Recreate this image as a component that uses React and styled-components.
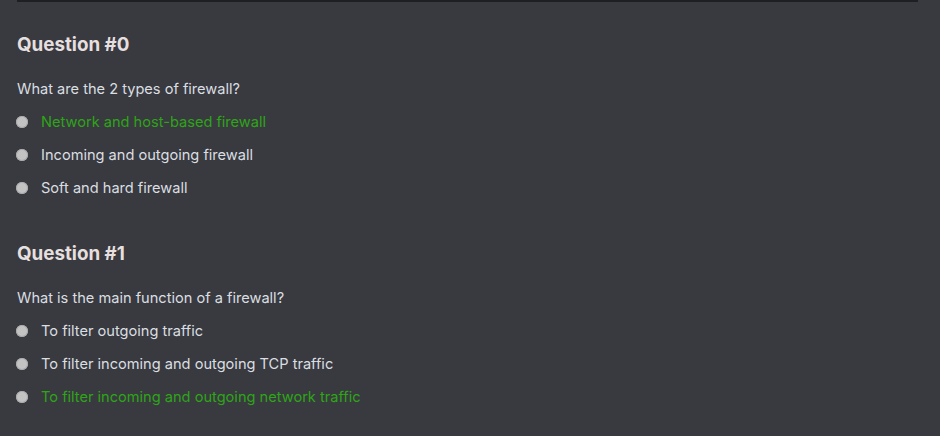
import React from "react";
import styled, { createGlobalStyle } from "styled-components";

const questions = [
	{
		title: "Question #0",
		text: "What are the 2 types of firewall?",
		answers: [
			{ label: "Network and host-based firewall", correct: true },
			{ label: "Incoming and outgoing firewall" },
			{ label: "Soft and hard firewall" },
		],
	},
	{
		title: "Question #1",
		text: "What is the main function of a firewall?",
		answers: [
			{ label: "To filter outgoing traffic" },
			{ label: "To filter incoming and outgoing TCP traffic" },
			{ label: "To filter incoming and outgoing network traffic", correct: true },
		],
	},
];

const App = () => {
	return (
		<StyledPage>
			<GlobalStyle />
			<StyledDivider />
			<StyledList>
				{questions.map((q) => (
					<StyledQuestion key={q.title}>
						<StyledTitle>{q.title}</StyledTitle>
						<StyledText>{q.text}</StyledText>
						<StyledAnswers>
							{q.answers.map((a) => (
								<StyledAnswer key={a.label}>
									<StyledRadio />
									<StyledLabel $correct={a.correct}>{a.label}</StyledLabel>
								</StyledAnswer>
							))}
						</StyledAnswers>
					</StyledQuestion>
				))}
			</StyledList>
		</StyledPage>
	);
};

const GlobalStyle = createGlobalStyle`
	html, body {
		margin: 0;
		background: #383a40;
	}
	body {
		font-family: Inter, "Noto Sans", sans-serif;
	}
`;

const StyledPage = styled.div`
	min-height: 436px;
	padding: 0 22px 0 17px;
	background: #383a40;
	box-sizing: border-box;
`;

const StyledDivider = styled.div`
	height: 2px;
	background: #1e1f22;
`;

const StyledList = styled.div`
	display: flex;
	flex-direction: column;
	gap: 45px;
	padding: 31px 0 0 0;
`;

const StyledQuestion = styled.div`
	display: flex;
	flex-direction: column;
`;

const StyledTitle = styled.h2`
	margin: 0;
	font-size: 18.8px;
	line-height: 24px;
	font-weight: 700;
	color: #e6dfdf;
`;

const StyledText = styled.p`
	margin: 23px 0 0 0;
	font-size: 14.6px;
	line-height: 18px;
	color: #dbdee1;
`;

const StyledAnswers = styled.div`
	display: flex;
	flex-direction: column;
	gap: 15px;
	margin: 15px 0 0 0;
`;

const StyledAnswer = styled.label`
	display: flex;
	align-items: center;
	gap: 13px;
	height: 18px;
`;

const StyledRadio = styled.span`
	width: 12px;
	height: 12px;
	margin-left: -1px;
	border-radius: 50%;
	background: #c3c3c3;
	box-shadow: inset 0 0 0 1px #a9a9a9;
	flex: 0 0 auto;
`;

const StyledLabel = styled.span`
	font-size: 14.6px;
	color: ${({ $correct }) => ($correct ? "#2ea516" : "#dbdee1")};
`;

export default App;
